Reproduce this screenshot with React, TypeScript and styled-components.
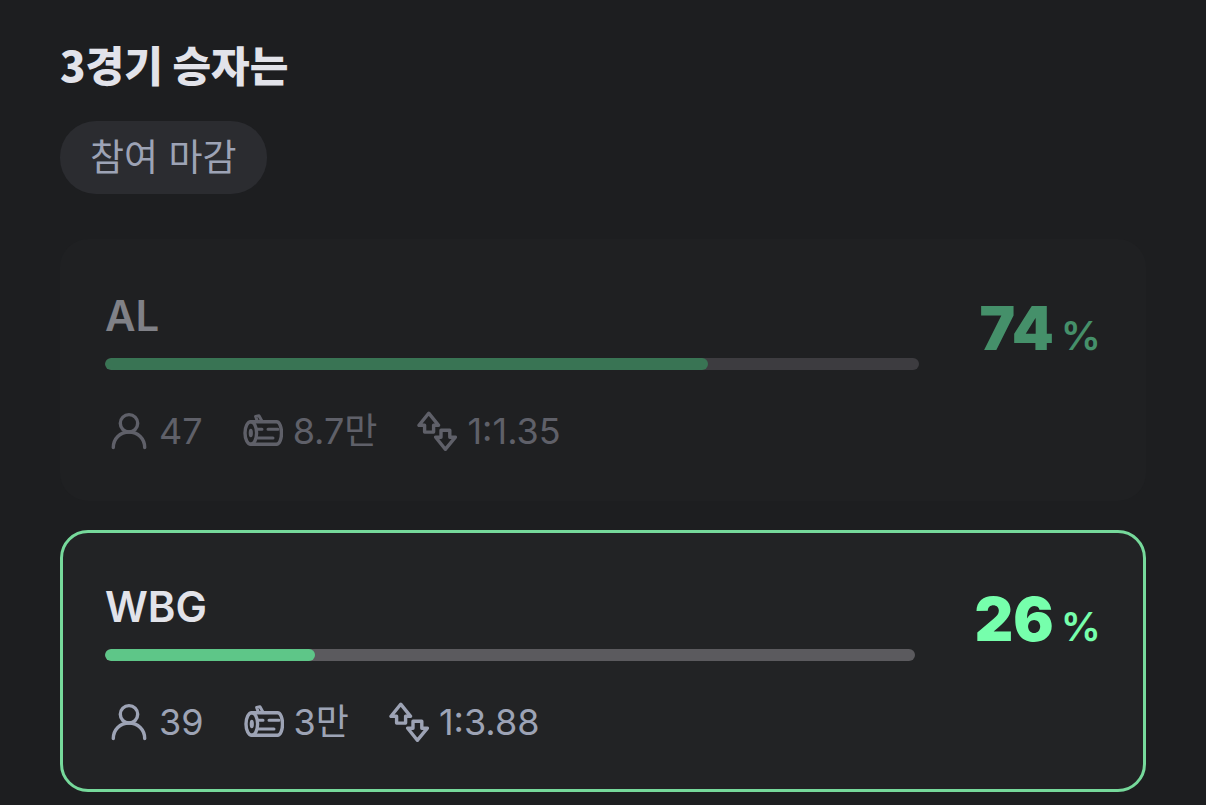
import React from "react";
import styled, { createGlobalStyle } from "styled-components";

const GlobalStyle = createGlobalStyle`
  *, *::before, *::after { box-sizing: border-box; }
  body {
    margin: 0;
    background: #1d1e20;
    font-family: Inter, "Noto Sans CJK KR", sans-serif;
  }
`;

const Page = styled.main`
  min-height: 100vh;
  padding: 34px 60px 12px;
  background: #1d1e20;
`;

const Title = styled.h1`
  margin: 0;
  font-family: "Noto Sans CJK KR", sans-serif;
  font-size: 42px;
  line-height: 60px;
  font-weight: 900;
  color: #e2e3ea;
`;

const Status = styled.span`
  display: block;
  width: fit-content;
  margin: 27px 0 45px;
  padding: 0 30px;
  border-radius: 36px;
  background: #2b2c30;
  color: #9da3b5;
  font-size: 37px;
  line-height: 73px;
`;

const OptionList = styled.ul`
  display: grid;
  gap: 29px;
  margin: 0;
  padding: 0;
  list-style: none;
`;

const Option = styled.li<{ $selected: boolean }>`
  padding: 49px 42px 45px;
  border: 3px solid ${(p) => (p.$selected ? "#76d99b" : "transparent")};
  border-radius: 28px;
  background: ${(p) => (p.$selected ? "#222325" : "#1f2022")};
`;

const Result = styled.div`
  display: flex;
  align-items: flex-start;
  gap: 60px;
`;

const Main = styled.div`
  flex: 1;
  min-width: 0;
`;

const Name = styled.h2<{ $selected: boolean }>`
  margin: 0 0 17px;
  font-size: 42px;
  line-height: 50px;
  font-weight: 600;
  color: ${(p) => (p.$selected ? "#e2e3ea" : "#808187")};
`;

const Track = styled.div<{ $selected: boolean }>`
  height: 12px;
  border-radius: 6px;
  overflow: hidden;
  background: ${(p) => (p.$selected ? "#5b5a5e" : "#3d3c40")};
`;

const Fill = styled.div<{ $selected: boolean }>`
  height: 100%;
  border-radius: 6px;
  background: ${(p) => (p.$selected ? "#5ec688" : "#397454")};
`;

const Percent = styled.p<{ $selected: boolean }>`
  display: flex;
  align-items: baseline;
  gap: 7px;
  margin: 0;
  padding-top: 2px;
  font-size: 60px;
  line-height: 70px;
  font-weight: 900;
  color: ${(p) => (p.$selected ? "#76ffac" : "#45906a")};
`;

const Unit = styled.span`
  font-size: 40px;
  font-weight: 600;
`;

const Stats = styled.ul<{ $selected: boolean }>`
  display: flex;
  gap: 40px;
  margin: 38px 0 0;
  padding: 0 0 0 4px;
  list-style: none;
  color: ${(p) => (p.$selected ? "#9da3b5" : "#5f6069")};
`;

const Stat = styled.li`
  display: flex;
  align-items: center;
  gap: 10px;
  font-size: 36px;
  line-height: 44px;
`;

const Icon = styled.svg`
  width: 40px;
  height: 40px;
  fill: none;
  stroke: currentColor;
  stroke-width: 3.4;
  stroke-linecap: round;
  stroke-linejoin: round;
`;

const PeopleIcon = () => (
  <Icon viewBox="0 0 40 40" aria-hidden="true">
    <circle cx="20" cy="12.3" r="8.7" />
    <path d="M4.3 36.5C4.3 27.8 11 21 20 21s15.700 6.800 15.700 15.500" />
  </Icon>
);

const LogIcon = () => (
  <Icon viewBox="0 0 40 40" aria-hidden="true">
    <ellipse cx="7.800" cy="22" rx="5.800" ry="11.300" />
    <ellipse cx="7.800" cy="22" rx="0.400" ry="2.600" />
    <path d="M8 10.700h25.500c3 0 5 5.200 5 11.300s-2 11.300-5 11.300H8" />
    <path d="M14.500 10.500L12.600 5.500l3.400-.8 3.200 5.800" strokeWidth="3" />
    <path d="M14.500 18.300h4.500M25 18.300h10M15 27h15" strokeWidth="3" />
  </Icon>
);

const OddsIcon = () => (
  <Icon viewBox="0 0 40 40" aria-hidden="true">
    <path d="M11.700 2.200L2 14.300h5.600v6.800h9v-6.800h5z" />
    <path d="M24 19.200h8.800v7h5.600L28.300 38.300 18.700 26.200H24z" />
  </Icon>
);

type Choice = {
  name: string;
  percent: number;
  people: string;
  logs: string;
  odds: string;
  selected: boolean;
};

const choices: Choice[] = [
  { name: "AL", percent: 74, people: "47", logs: "8.7만", odds: "1:1.35", selected: false },
  { name: "WBG", percent: 26, people: "39", logs: "3만", odds: "1:3.88", selected: true },
];

const ChoiceCard = ({ name, percent, people, logs, odds, selected }: Choice) => (
  <Option $selected={selected}>
    <Result>
      <Main>
        <Name $selected={selected}>{name}</Name>
        <Track $selected={selected}>
          <Fill $selected={selected} style={{ width: `${percent}%` }} />
        </Track>
      </Main>
      <Percent $selected={selected}>
        {percent}
        <Unit>%</Unit>
      </Percent>
    </Result>
    <Stats $selected={selected}>
      <Stat><PeopleIcon />{people}</Stat>
      <Stat><LogIcon />{logs}</Stat>
      <Stat><OddsIcon />{odds}</Stat>
    </Stats>
  </Option>
);

export default function App() {
  return (
    <Page>
      <GlobalStyle />
      <Title>3경기 승자는</Title>
      <Status>참여 마감</Status>
      <OptionList>
        {choices.map((choice) => (
          <ChoiceCard key={choice.name} {...choice} />
        ))}
      </OptionList>
    </Page>
  );
}
